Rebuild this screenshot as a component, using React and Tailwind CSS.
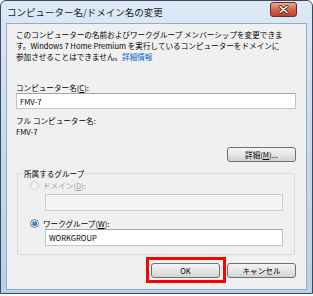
import React from 'react';

const Radio = ({ checked, disabled }) => (
  <span
    className={`w-[9px] h-[9px] rounded-full border flex items-center justify-center shrink-0 ${
      disabled ? 'border-[#cfcfcf] bg-[#f2f2f2]' : 'border-[#6f7f8f] bg-linear-to-br from-[#dcdcdc] to-white'
    }`}
  >
    {checked && <span className="w-[5px] h-[5px] rounded-full bg-linear-to-br from-[#7cc0f0] to-[#1b4f96]"></span>}
  </span>
);

const WinButton = ({ children }) => (
  <div className="w-[69px] h-[15px] rounded-[3px] border border-[#707070] bg-linear-to-b from-[#f4f4f4] via-[#e6e6e6] to-[#d2d2d2] flex items-center justify-center text-[#000]">
    {children}
  </div>
);

const App = () => {
  return (
    <div className="w-[313px] h-[296px] bg-white font-['Noto_Sans_CJK_JP','Liberation_Sans',sans-serif]">
      <div className="h-[294px] border border-[#3b4a5a] rounded-t-[6px] bg-linear-to-b from-[#dde9f6] via-[#c6d9ee] to-[#b9d0e9] flex flex-col">
        {/* Title bar */}
        <div className="h-[22px] flex items-start justify-between">
          <span className="pl-[6px] pt-[5px] text-[9.5px] leading-[12px] text-[#1b1b1b] whitespace-nowrap">
            コンピューター名/ドメイン名の変更
          </span>
          <div className="mt-[1px] mr-[15px] w-[27px] h-[15px] rounded-[3px] border border-[#6b2b22] bg-linear-to-b from-[#eba897] via-[#d3654f] to-[#c23c26] flex items-center justify-center">
            <svg width="11" height="9" viewBox="0 0 11 9">
              <path d="M2 1.5 L9 7.5 M9 1.5 L2 7.5" stroke="#5a1f16" strokeWidth="3" strokeLinecap="round" />
              <path d="M2 1.5 L9 7.5 M9 1.5 L2 7.5" stroke="#ffffff" strokeWidth="1.6" strokeLinecap="round" />
            </svg>
          </div>
        </div>

        {/* Client area */}
        <div className="mx-[5px] h-[267px] border border-[#98abc2] bg-[#f0f0f0] pl-[9px] pr-[10px] flex flex-col text-[7.6px] leading-[11px] text-black">
          <p className="mt-[5px] whitespace-nowrap">
            このコンピューターの名前およびワークグループ メンバーシップを変更できま
            <br />
            す。Windows 7 Home Premium を実行しているコンピューターをドメインに
            <br />
            参加させることはできません。<span className="text-[#0066cc]">詳細情報</span>
          </p>

          <div className="mt-[20px]">
            コンピューター名(<span className="underline">C</span>):
          </div>
          <div className="h-[16px] w-full border border-[#b7c6d6] border-t-[#9aa7b5] bg-white pl-[3px] flex items-center">
            FMV-7
          </div>

          <div className="mt-[6px]">フル コンピューター名:</div>
          <div>FMV-7</div>

          <div className="mt-[10px] self-end">
            <WinButton>
              詳細(<span className="underline">M</span>)...
            </WinButton>
          </div>

          <fieldset className="mt-[6px] mx-[1px] border border-[#d3dce4] pb-[8px]">
            <legend className="ml-[5px] px-[1px] leading-[11px]">所属するグループ</legend>
            <div className="mt-[1px] pl-[12px] flex items-center gap-[4px] text-[#a0a0a0]">
              <Radio disabled />
              <span>
                ドメイン(<span className="underline">D</span>):
              </span>
            </div>
            <div className="mt-[3px] ml-[27px] w-[238px] h-[17px] border border-[#cdcdcd] bg-[#f4f4f4]"></div>

            <div className="mt-[7px] pl-[12px] flex items-center gap-[4px]">
              <Radio checked />
              <span>
                ワークグループ(<span className="underline">W</span>):
              </span>
            </div>
            <div className="ml-[27px] w-[238px] h-[17px] border border-[#b7c6d6] border-t-[#9aa7b5] bg-white pl-[3px] flex items-center">
              WORKGROUP
            </div>
          </fieldset>

          <div className="mt-[8px] flex justify-end gap-[7px]">
            <div className="relative">
              <WinButton>OK</WinButton>
              <span className="absolute -left-[5px] -right-[6px] -top-[6px] -bottom-[5px] border-[3px] border-[#ff0000]"></span>
            </div>
            <WinButton>キャンセル</WinButton>
          </div>
        </div>
      </div>
    </div>
  );
};

export default App;
